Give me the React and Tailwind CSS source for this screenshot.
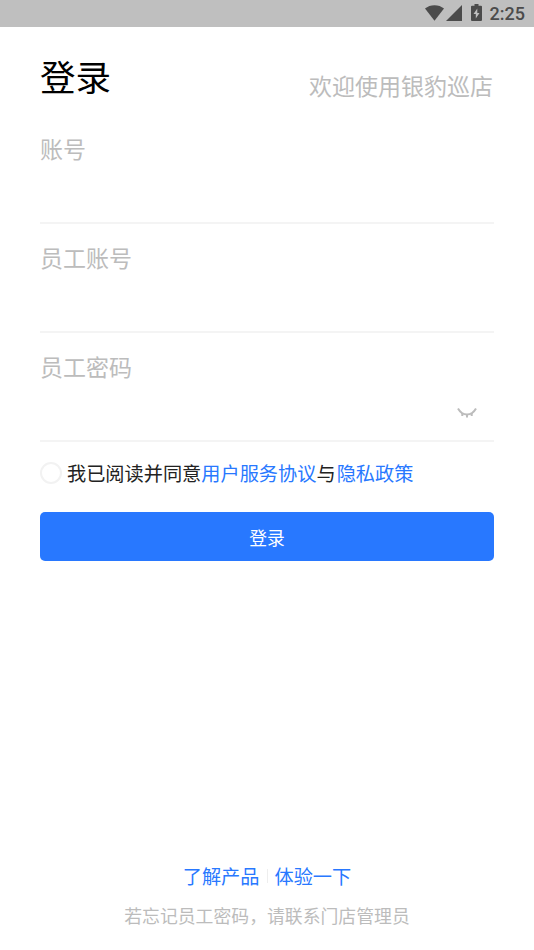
import React, { useState } from 'react';

function StatusBar() {
  return (
    <div className="flex h-[27px] items-center justify-end bg-[#bfbfbf] pr-[9px] pb-[2px] text-[#4b4b4b]">
      <svg className="h-[16px] w-[19px]" viewBox="0 0 20 16" preserveAspectRatio="none" fill="currentColor">
        <path d="M0 3.6C2.8 1.4 6.2.2 10 .2s7.200 1.200 10 3.400L10 15.800z" />
      </svg>
      <svg className="ml-[2px] h-[16px] w-[16px]" viewBox="0 0 16 16" fill="currentColor">
        <path d="M16 0v16H0z" />
      </svg>
      <svg className="ml-[9px] h-[17px] w-[11px]" viewBox="0 0 11 17">
        <path fill="currentColor" d="M3.500 0h4v1.800H10a1 1 0 0 1 1 1V16a1 1 0 0 1-1 1H1a1 1 0 0 1-1-1V2.800a1 1 0 0 1 1-1h2.500z" />
        <path fill="#bfbfbf" d="M6.300 4.500 2.500 10h2.300v4.500L8.500 9H6.300z" />
      </svg>
      <span className="ml-[8px] pt-[2px] font-[Roboto,sans-serif] text-[18px] leading-[25px] font-medium">2:25</span>
    </div>
  );
}

function ClosedEyeIcon() {
  return (
    <svg className="mt-[3px] h-[12px] w-[20px]" viewBox="0 0 20 12" fill="none" stroke="#bcbcbc" strokeWidth="2">
      <path d="M1 1.500C3 5 6.200 7.500 10 7.500s7-2.500 9-6" />
      <path d="M5.300 6v3M10 7v3.500M14.700 6v3" />
    </svg>
  );
}

function Field({ label, type = 'text', children }) {
  return (
    <label className="block h-[109px] border-b-2 border-[#f4f4f4] pt-[16px]">
      <span className="block text-[23px] leading-[34px] text-[#bcbcbc]">{label}</span>
      <span className="flex h-[56px] items-center pr-[17px]">
        <input type={type} className="min-w-0 flex-1 text-[20px] outline-none" />
        {children}
      </span>
    </label>
  );
}

export default function App() {
  const [agreed, setAgreed] = useState(false);

  return (
    <div className="flex h-[950px] w-full flex-col overflow-hidden bg-white font-['Noto_Sans_CJK_SC',sans-serif]">
      <StatusBar />

      <main className="flex flex-1 flex-col px-[40px]">
        {/* Heading */}
        <header className="flex h-[88px] items-start justify-between pt-[23px]">
          <h1 className="text-[35.500px] leading-[52px] text-black">登录</h1>
          <p className="pt-[18px] pr-px text-[23px] leading-[34px] text-[#bcbcbc]">欢迎使用银豹巡店</p>
        </header>

        <Field label="账号" />
        <Field label="员工账号" />
        <Field label="员工密码" type="password">
          <ClosedEyeIcon />
        </Field>

        {/* Agreement */}
        <div className="mt-[17px] flex h-[28px] items-center">
          <button
            type="button"
            onClick={() => setAgreed(!agreed)}
            className={`mr-[5px] h-[22px] w-[22px] rounded-full border-2 ${agreed ? 'border-[#2878ff] bg-[#2878ff]' : 'border-[#f2f2f2]'}`}
          />
          <p className="text-[19.200px] leading-[28px] whitespace-nowrap text-[#222]">
            我已阅读并同意<a className="text-[#2878ff]">用户服务协议</a>与<a className="ml-px text-[#2878ff]">隐私政策</a>
          </p>
        </div>

        <button type="button" className="mt-[25px] h-[49px] rounded-[5px] bg-[#2878ff] pt-[2px] text-[17.800px] text-white">
          登录
        </button>

        {/* Footer */}
        <footer className="mt-auto pb-[22px]">
          <div className="flex items-center justify-center text-[19.200px] leading-[28px] text-[#2878ff]">
            <a>了解产品</a>
            <span className="mx-[7px] h-[14px] w-px bg-[#eee]" />
            <a>体验一下</a>
          </div>
          <p className="mt-[12px] text-center text-[17.850px] leading-[26px] text-[#bcbcbc]">
            若忘记员工密码，请联系门店管理员
          </p>
        </footer>
      </main>
    </div>
  );
}
